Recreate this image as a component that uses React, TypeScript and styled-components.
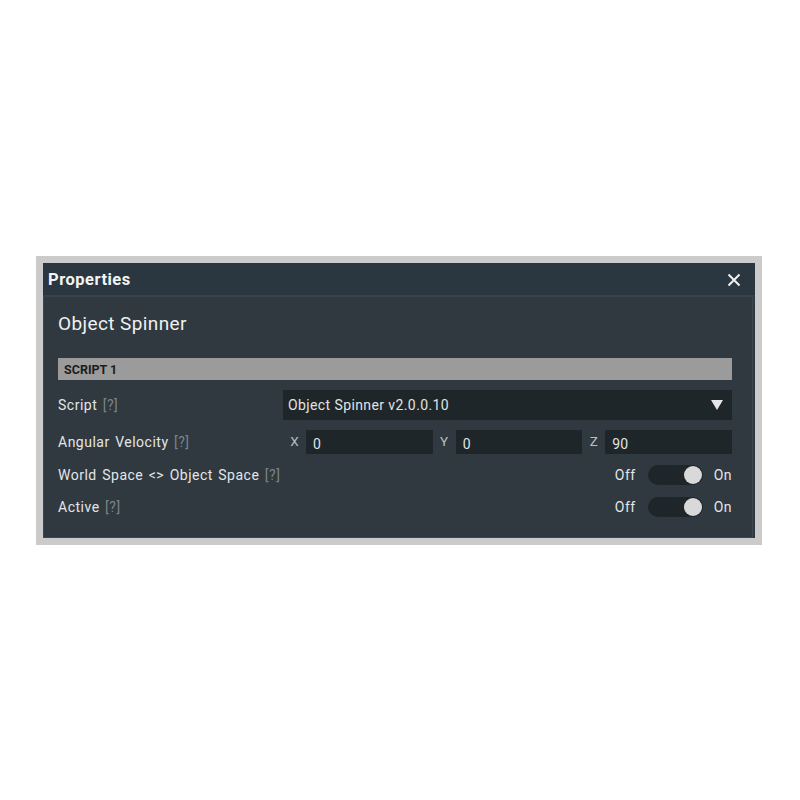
import React from "react";
import styled, { createGlobalStyle } from "styled-components";

const GlobalStyle = createGlobalStyle`
  html, body {
    margin: 0;
    padding: 0;
    background: #ffffff;
  }
  body {
    font-family: "Roboto", "Liberation Sans", sans-serif;
  }
`;

const App = () => {
  return (
    <>
      <GlobalStyle />
      <Page>
        <Frame>
          <Header>
            <HeaderTitle>Properties</HeaderTitle>
            <CloseButton aria-label="close">
              <svg width="14" height="14" viewBox="0 0 14 14">
                <path d="M1.5 1.5 L12.5 12.5 M12.5 1.5 L1.5 12.5" stroke="#eef0f1" strokeWidth="2" />
              </svg>
            </CloseButton>
          </Header>
          <Body>
            <Title>Object Spinner</Title>
            <SectionBar>SCRIPT 1</SectionBar>
            <Rows>
              <Row $height={30}>
                <Label>
                  Script <Help>[?]</Help>
                </Label>
                <Controls>
                  <Select>
                    <span>Object Spinner v2.0.0.10</span>
                    <svg width="12" height="10" viewBox="0 0 12 10">
                      <path d="M0 0 H12 L6 10 Z" fill="#e4e6e7" />
                    </svg>
                  </Select>
                </Controls>
              </Row>
              <Row $height={24}>
                <Label>
                  Angular Velocity <Help>[?]</Help>
                </Label>
                <Controls>
                  {[
                    ["X", "0"],
                    ["Y", "0"],
                    ["Z", "90"],
                  ].map(([axis, value]) => (
                    <AxisGroup key={axis}>
                      <AxisLabel>{axis}</AxisLabel>
                      <NumberInput>{value}</NumberInput>
                    </AxisGroup>
                  ))}
                </Controls>
              </Row>
              <Row $height={22}>
                <Label>
                  World Space {"<>"} Object Space <Help>[?]</Help>
                </Label>
                <Toggle />
              </Row>
              <Row $height={22}>
                <Label>
                  Active <Help>[?]</Help>
                </Label>
                <Toggle />
              </Row>
            </Rows>
          </Body>
        </Frame>
      </Page>
    </>
  );
};

const Toggle = () => (
  <ToggleWrap>
    <ToggleText>Off</ToggleText>
    <Track>
      <Knob />
    </Track>
    <ToggleText>On</ToggleText>
  </ToggleWrap>
);

export default App;

const Page = styled.div`
  width: 800px;
  height: 800px;
  padding-top: 256px;
  padding-left: 36px;
  box-sizing: border-box;
`;

const Frame = styled.div`
  width: 726px;
  box-sizing: border-box;
  border: 7px solid #cbcbcb;
  background: #2f393f;
`;

const Header = styled.div`
  height: 32px;
  background: #2b3740;
  border-bottom: 2px solid #37434b;
  display: flex;
  align-items: center;
  justify-content: space-between;
  padding: 0 14px 0 5px;
`;

const HeaderTitle = styled.h1`
  margin: 0;
  font-size: 16.5px;
  font-weight: 700;
  color: #f2f4f5;
  letter-spacing: 0.5px;
`;

const CloseButton = styled.div`
  display: flex;
  align-items: center;
  margin-top: 2px;
`;

const Body = styled.div`
  border: 1px solid #3d474d;
  border-top: none;
  margin-right: 2px;
  padding: 13px 20px 19px 14px;
`;

const Title = styled.h2`
  margin: 0;
  height: 28px;
  line-height: 28px;
  font-size: 19px;
  font-weight: 400;
  letter-spacing: 0.4px;
  color: #eef0f1;
`;

const SectionBar = styled.div`
  margin-top: 20px;
  height: 22px;
  line-height: 23px;
  background: #9b9b9b;
  padding-left: 6px;
  font-size: 12.5px;
  font-weight: 700;
  color: #1b1d1e;
`;

const Rows = styled.div`
  display: flex;
  flex-direction: column;
  gap: 10px;
  margin-top: 10px;
`;

const Row = styled.div<{ $height: number }>`
  display: flex;
  align-items: center;
  height: ${(p) => p.$height}px;
`;

const Label = styled.div`
  width: 225px;
  flex-shrink: 0;
  font-size: 14px;
  color: #e3e6e8;
  word-spacing: 1.5px;
  letter-spacing: 0.5px;
  white-space: nowrap;
`;

const Help = styled.span`
  color: #7b8489;
`;

const Controls = styled.div`
  flex: 1;
  display: flex;
  height: 100%;
`;

const Select = styled.div`
  flex: 1;
  display: flex;
  align-items: center;
  justify-content: space-between;
  background: #1f2629;
  padding: 0 9px 0 5px;
  font-size: 14px;
  color: #e0e3e4;
  letter-spacing: 0.4px;
`;

const AxisGroup = styled.div`
  flex: 1;
  display: flex;
  align-items: stretch;
`;

const AxisLabel = styled.div`
  width: 23px;
  flex-shrink: 0;
  text-align: center;
  font-size: 13.5px;
  line-height: 22px;
  color: #b9bfc2;
`;

const NumberInput = styled.div`
  flex: 1;
  background: #1f2629;
  padding: 3px 7px 0;
  font-size: 14px;
  line-height: 22px;
  color: #e0e3e4;
`;

const ToggleWrap = styled.div`
  margin-left: auto;
  display: flex;
  align-items: center;
`;

const ToggleText = styled.span`
  font-size: 14px;
  letter-spacing: 0.5px;
  color: #e3e6e8;
`;

const Track = styled.div`
  width: 55px;
  height: 20px;
  margin: 0 11px 0 12px;
  border-radius: 10px;
  background: #1f2629;
  display: flex;
  align-items: center;
  justify-content: flex-end;
  padding-right: 1px;
  box-sizing: border-box;
`;

const Knob = styled.div`
  width: 18px;
  height: 18px;
  border-radius: 50%;
  background: #d9d9d9;
`;
